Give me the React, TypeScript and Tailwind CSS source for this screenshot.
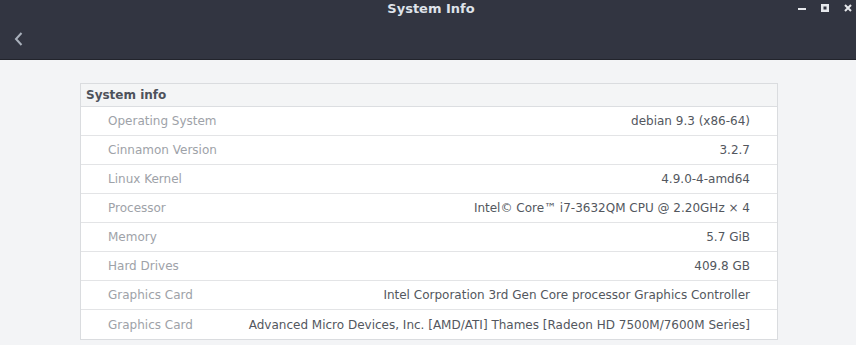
const rows: [string, string][] = [
  ["Operating System", "debian 9.3 (x86-64)"],
  ["Cinnamon Version", "3.2.7"],
  ["Linux Kernel", "4.9.0-4-amd64"],
  ["Processor", "Intel© Core™ i7-3632QM CPU @ 2.20GHz × 4"],
  ["Memory", "5.7 GiB"],
  ["Hard Drives", "409.8 GB"],
  ["Graphics Card", "Intel Corporation 3rd Gen Core processor Graphics Controller"],
  ["Graphics Card", "Advanced Micro Devices, Inc. [AMD/ATI] Thames [Radeon HD 7500M/7600M Series]"],
];

export default function App() {
  return (
    <div
      className="w-[856px] h-[345px] bg-[#f3f4f6] overflow-hidden"
      style={{ fontFamily: '"DejaVu Sans", sans-serif' }}
    >
      <div className="h-[60px] bg-[#323541] border-b border-[#22242c] relative">
        <div className="h-[18px] pl-[6px] flex items-center justify-center text-[13px] font-bold text-[#dfe3ea]">
          System Info
        </div>
        <div className="absolute right-[4px] top-[4px] flex items-center gap-[15px]">
          <svg width="8" height="8" viewBox="0 0 8 8"><rect x="0" y="4" width="8" height="2" fill="#e6e8ec" /></svg>
          <svg width="8" height="8" viewBox="0 0 8 8"><path d="M0 0h8v8H0z M2.5 2.5v3h3v-3z" fill="#e6e8ec" fillRule="evenodd" /></svg>
          <svg width="8" height="8" viewBox="0 0 8 8"><path d="M1 1l6 6M7 1L1 7" stroke="#e6e8ec" strokeWidth="2" /></svg>
        </div>
        <div className="pl-[14px] pt-[14px]">
          <svg width="9" height="14" viewBox="0 0 9 14">
            <path d="M7.5 1L2 7l5.5 6" fill="none" stroke="#a9b0bb" strokeWidth="2" />
          </svg>
        </div>
      </div>
      <div className="pt-[23px] pl-[80px]">
        <div className="w-[698px] border border-[#dadcdf] bg-white">
          <div className="h-[23px] bg-[#f4f5f6] border-b border-[#dcdee1] px-[5px] flex items-center text-[12px] font-bold text-[#4e525b]">
            System info
          </div>
          {rows.map(([k, v], i) => (
            <div
              key={i}
              className={`h-[29px] flex items-center justify-between pl-[27px] pr-[27px] text-[12px] ${i < rows.length - 1 ? "border-b border-[#e3e4e6]" : ""}`}
            >
              <span className="text-[#9ea2a8]">{k}</span>
              <span className="text-[#53575e]">{v}</span>
            </div>
          ))}
        </div>
      </div>
    </div>
  );
}
